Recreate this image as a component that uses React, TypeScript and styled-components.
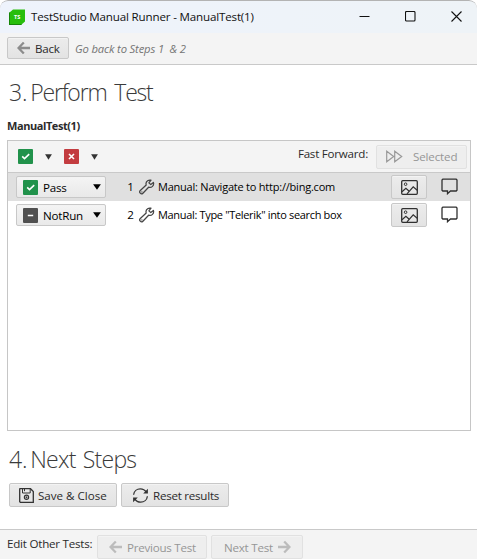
import React from "react";
import styled, { createGlobalStyle } from "styled-components";

const Global = createGlobalStyle`
  * { box-sizing: border-box; }
  html, body { margin: 0; height: 559px; overflow: hidden; background: #fff; }
  svg { display: block; flex: none; }
`;

const Window = styled.div`
  width: 477px;
  height: 559px;
  display: flex;
  flex-direction: column;
  overflow: hidden;
  background: #fff;
  border-radius: 8px 8px 0 0;
  font-family: "Open Sans", "Noto Sans", sans-serif;
  font-size: 11.6px;
  line-height: 16px;
  color: #2b2b2b;
  white-space: pre;
`;

const TitleBar = styled.header`
  display: flex;
  align-items: center;
  height: 33px;
  flex: none;
  padding-left: 9px;
  border-top: 1px solid #b3b3b3;
  border-radius: 8px 8px 0 0;
  background: linear-gradient(90deg, #eef3fc, #eef3f7);
`;

const Text = styled.span<{ $track?: number; $word?: number }>`
  letter-spacing: ${(p) => p.$track ?? -0.25}px;
  word-spacing: ${(p) => p.$word ?? 0}px;
`;

const Title = styled(Text)`
  flex: 1;
  padding-left: 5px;
  color: #111;
`;

const Caption = styled.div`
  display: flex;
  gap: 35px;
  padding: 0 15px 2px 0;
`;

const Toolbar = styled.div`
  display: flex;
  align-items: flex-start;
  gap: 6px;
  flex: none;
  height: 32px;
  padding: 4px 7px 0;
  background: #f4f4f4;
  border-bottom: 1px solid #c9c9c9;
`;

const Button = styled.button<{ $w: number; $h?: number; $left?: number; $gap?: number }>`
  display: flex;
  align-items: center;
  flex: none;
  gap: ${(p) => p.$gap ?? 5}px;
  width: ${(p) => p.$w}px;
  height: ${(p) => p.$h ?? 24}px;
  padding: 0 0 0 ${(p) => p.$left ?? 9}px;
  border: 1px solid #c8c8c8;
  border-radius: 2px;
  background: linear-gradient(#ececec, #e3e3e3);
  box-shadow: inset 0 1px #f3f3f3;
  color: #2b2b2b;
  font: inherit;
  white-space: pre;
  ${Text} {
    padding-top: 1px;
  }
  &:disabled {
    border-color: #e1e1e1;
    background: #eee;
    color: #969696;
  }
`;

const Hint = styled(Text)`
  padding-top: 4px;
  font-size: 11.25px;
  font-style: italic;
  color: #757575;
`;

const Heading = styled.h1<{ $top: number; $gap: number }>`
  display: flex;
  gap: ${(p) => p.$gap}px;
  margin: ${(p) => p.$top}px 0 0 9px;
  font-size: 23px;
  font-weight: 300;
  line-height: 32px;
  color: #3a3a3a;
`;

const TestName = styled(Text)`
  margin: 10px 0 0 7px;
  font-size: 11px;
  font-weight: 700;
`;

const Panel = styled.section`
  display: flex;
  flex-direction: column;
  flex: none;
  width: 464px;
  height: 291px;
  margin: 6px 0 0 7px;
  border: 1px solid #c6c6c6;
`;

const PanelBar = styled.div`
  display: flex;
  align-items: center;
  height: 32px;
  flex: none;
  padding: 0 3px 0 10px;
  background: #f4f4f4;
  border-bottom: 1px solid #c9c9c9;
`;

const Filters = styled.div`
  display: flex;
  align-items: center;
  gap: 12px;
  flex: 1;
`;

const FastForward = styled(Text)`
  padding: 0 8px 6px 0;
`;

const Row = styled.div<{ $selected?: boolean }>`
  display: flex;
  align-items: center;
  height: 28px;
  flex: none;
  padding-left: 8px;
  background: ${(p) => (p.$selected ? "#e0e0e0" : "#fff")};
  color: #000;
`;

const Status = styled(Button)`
  background: linear-gradient(#f4f4f4, #e9e9e9);
  color: #000;
`;

const StatusLabel = styled(Text)`
  flex: 1;
  text-align: left;
`;

const StatusArrow = styled.span`
  padding-right: 4px;
`;

const Index = styled.span`
  width: 33px;
  padding-right: 5px;
  text-align: right;
`;

const StepText = styled(Text)`
  flex: 1;
  padding-left: 3px;
  font-size: 11px;
`;

const CommentSlot = styled.div`
  padding: 0 12px 1px 14px;
`;

const Actions = styled.div`
  display: flex;
  gap: 4px;
  margin: 8px 0 0 9px;
`;

const Footer = styled.footer`
  display: flex;
  align-items: flex-start;
  gap: 4px;
  height: 30px;
  margin-top: auto;
  padding: 5px 0 0 7px;
  background: #f4f4f4;
  border-top: 1px solid #c9c9c9;
`;

const FooterLabel = styled(Text)`
  width: 86px;
  padding-top: 1px;
`;

const Logo = () => (
  <svg width="17" height="17" viewBox="0 0 17 17">
    <path d="M0 4 4 .5h12v12L12 16H0z" fill="#28be0c" />
    <path d="M0 4v12h12l1-1H1V3z" fill="#168508" />
    <text x="5" y="10" fontSize="5.5" fontWeight="700" fontFamily="Open Sans, sans-serif" fill="#fff">TS</text>
  </svg>
);

const Minimize = () => (
  <svg width="11" height="11" viewBox="0 0 11 11"><path d="M.5 5.5h10" stroke="#111" /></svg>
);
const Maximize = () => (
  <svg width="11" height="11" viewBox="0 0 11 11"><rect x=".5" y=".5" width="9.5" height="9.5" rx="1" fill="none" stroke="#111" strokeWidth="1.1" /></svg>
);
const Close = () => (
  <svg width="11" height="11" viewBox="0 0 11 11"><path d="m.5.5 10 10m0-10-10 10" stroke="#111" strokeWidth="1.1" /></svg>
);

const Arrow = ({ right, color }: { right?: boolean; color: string }) => (
  <svg width="13" height="14" viewBox="0 0 13 14">
    <path
      d={right ? "M0 7h11M6.2 1.5 11.5 7l-5.3 5.5" : "M13 7H2M6.8 1.5 1.5 7l5.3 5.5"}
      fill="none"
      stroke={color}
      strokeWidth="2.3"
    />
  </svg>
);

const Caret = ({ size = 7, color = "#333" }: { size?: number; color?: string }) => (
  <svg width={size} height="6" viewBox="0 0 8 6" preserveAspectRatio="none"><path d="M.1.3h7.8L4 5.8z" fill={color} /></svg>
);

const marks = {
  pass: { fill: "#21924b", d: "m4.2 7.4 2.3 2.2 4.7-4.4" },
  fail: { fill: "#c33c40", d: "m5 5 5 5m0-5-5 5" },
  none: { fill: "#505050", d: "M4.8 7.5h5.4" },
};

const Mark = ({ kind }: { kind: keyof typeof marks }) => (
  <svg width="15" height="15" viewBox="0 0 15 15">
    <rect width="15" height="15" rx="1" fill={marks[kind].fill} />
    <path d={marks[kind].d} stroke="#fff" strokeWidth="1.6" fill="none" />
  </svg>
);

const Forward = () => (
  <svg width="17" height="13" viewBox="0 0 17 13">
    <path d="M.7 1.2v10.6l7-5.3zM8.7 1.2v10.6l7-5.3z" fill="none" stroke="#999" strokeWidth="1.2" />
  </svg>
);

const Wrench = () => (
  <svg width="16" height="16" viewBox="0 0 16 16">
    <path
      d="M14.4 3.4 11.8 5.6 9.9 3.9 12 1.2C9.5.6 7.2 2.1 7 4.4c0 .6 0 1.1.2 1.6L1.3 11.5c-1.8 1.8.8 4.4 2.6 2.7l5.7-6c2.9 1 5.8-1.5 4.8-4.8z"
      fill="none" stroke="#454545" strokeWidth="1.25" strokeLinejoin="round"
    />
    <circle cx="2.9" cy="12.9" r=".6" fill="#454545" />
  </svg>
);

const Picture = () => (
  <svg width="17" height="15" viewBox="0 0 17 15">
    <rect x=".7" y=".7" width="15.6" height="13.6" rx="1" fill="none" stroke="#303030" strokeWidth="1.3" />
    <circle cx="4.6" cy="4.2" r="1.3" fill="none" stroke="#303030" />
    <path d="m1 11.8 3.9-3.5 3 2.7M6 13.8l6.2-7 4 3.5" fill="none" stroke="#303030" strokeWidth="1.2" />
  </svg>
);

const Comment = () => (
  <svg width="17" height="17" viewBox="0 0 17 17">
    <path d="M1.8 1.2h13.4l.8.8v10.2l-.8.8H9.5l-3 2.7V13H1.8l-.8-.8V2z" fill="none" stroke="#303030" strokeWidth="1.3" />
  </svg>
);

const Save = () => (
  <svg width="15" height="15" viewBox="0 0 15 15" fill="none" stroke="#333">
    <path d="M.7 1.4.9.7h10.6l2.8 2.8v10.8H1.4l-.7-.6z" strokeWidth="1.3" />
    <path d="M3.5 1v4h7.7V1M5.5 3.2V1" />
    <circle cx="7.5" cy="9.3" r="2.1" strokeWidth="1.2" />
    <circle cx="7.5" cy="9.3" r=".5" fill="#333" />
  </svg>
);

const Refresh = () => (
  <svg width="17" height="15" viewBox="0 0 17 15" fill="none" stroke="#333" strokeWidth="1.3">
    <path d="M1.6 6.7C2 3 5 .9 8.3.9c2.7 0 4.7 1.2 6 3.3M15.4 8.3c-.4 3.7-3.4 5.8-6.7 5.8-2.7 0-4.7-1.2-6-3.3" />
    <path d="M15.9.8v4.7h-4.7zM1.1 14.2V9.5h4.7z" fill="#333" stroke="none" />
  </svg>
);

const steps = [
  { status: "Pass", mark: "pass" as const, text: "Manual: Navigate to http://bing.com", track: -0.22 },
  { status: "NotRun", mark: "none" as const, text: 'Manual: Type "Telerik" into search box', track: -0.33 },
];

export default function App() {
  return (
    <Window>
      <Global />
      <TitleBar>
        <Logo />
        <Title $track={-0.17}>TestStudio Manual Runner - ManualTest(1)</Title>
        <Caption><Minimize /><Maximize /><Close /></Caption>
      </TitleBar>
      <Toolbar>
        <Button $w={62} $h={22}><Arrow color="#8c8c8c" /><Text>Back</Text></Button>
        <Hint $track={-0.15}>Go back to Steps 1  &amp; 2</Hint>
      </Toolbar>

      <Heading $top={11} $gap={3}><Text $track={-0.2}>3.</Text><Text $track={-1.2} $word={3}>Perform Test</Text></Heading>
      <TestName $track={-0.43}>ManualTest(1)</TestName>

      <Panel>
        <PanelBar>
          <Filters>
            <Mark kind="pass" /><Caret /><Mark kind="fail" /><Caret />
          </Filters>
          <FastForward $track={-0.23}>Fast Forward:</FastForward>
          <Button $w={91} $gap={10} disabled><Forward /><Text $track={-0.15}>Selected</Text></Button>
        </PanelBar>
        {steps.map((step, i) => (
          <Row key={step.text} $selected={i === 0}>
            <Status $w={90} $h={22} $left={6}>
              <Mark kind={step.mark} />
              <StatusLabel $track={-0.2}>{step.status}</StatusLabel>
              <StatusArrow><Caret size={8} color="#000" /></StatusArrow>
            </Status>
            <Index>{i + 1}</Index>
            <Wrench />
            <StepText $track={step.track}>{step.text}</StepText>
            <Button $w={36} $left={9}><Picture /></Button>
            <CommentSlot><Comment /></CommentSlot>
          </Row>
        ))}
      </Panel>

      <Heading $top={12} $gap={3}><Text $track={-0.2}>4.</Text><Text $track={-0.75} $word={2}>Next Steps</Text></Heading>
      <Actions>
        <Button $w={108} $gap={4}><Save /><Text $track={0}>Save &amp; Close</Text></Button>
        <Button $w={108} $left={10} $gap={4}><Refresh /><Text $track={-0.25}>Reset results</Text></Button>
      </Actions>

      <Footer>
        <FooterLabel $track={-0.23}>Edit Other Tests:</FooterLabel>
        <Button $w={110} $left={11} disabled><Arrow color="#bcbcbc" /><Text $track={-0.25}>Previous Test</Text></Button>
        <Button $w={92} $left={12} disabled><Text $track={-0.23}>Next Test</Text><Arrow right color="#bcbcbc" /></Button>
      </Footer>
    </Window>
  );
}
